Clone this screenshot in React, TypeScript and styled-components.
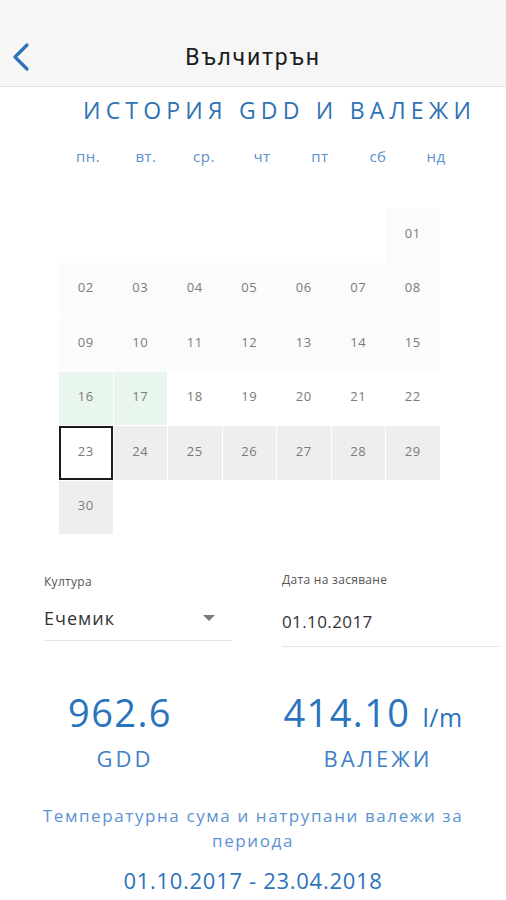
import React from "react";
import styled, { createGlobalStyle } from "styled-components";

const Global = createGlobalStyle`
  html, body { margin: 0; padding: 0; background: #ffffff; }
  body { font-family: "Open Sans", "DejaVu Sans", sans-serif; }
  * { box-sizing: border-box; }
`;

const Page = styled.div`
  width: 506px;
  height: 900px;
  overflow: hidden;
  background: #fff;
  display: flex;
  flex-direction: column;
`;

const Header = styled.header`
  height: 87px;
  background: #f6f6f6;
  border-bottom: 1px solid #e2e2e2;
  display: grid;
  grid-template-columns: 60px 1fr 60px;
  align-items: center;
  padding-top: 28px;
`;

const BackButton = styled.div`
  padding-left: 10px;
  display: flex;
  align-items: center;
`;

const HeaderTitle = styled.h1`
  margin: 0;
  text-align: center;
  font-family: Roboto, "Open Sans", sans-serif;
  font-weight: 400;
  font-size: 23px;
  letter-spacing: 1.8px;
  color: #1d1d1d;
`;

const SectionTitle = styled.h2`
  margin: 8px 0 0 0;
  padding-left: 83px;
  font-weight: 400;
  font-size: 23px;
  letter-spacing: 5.2px;
  color: #2f73b4;
  line-height: 30px;
  white-space: nowrap;
`;

const WeekRow = styled.div`
  margin: 20px 0 0 59px;
  display: grid;
  grid-template-columns: repeat(7, 58px);
  line-height: 22px;
`;

const WeekDay = styled.div`
  text-align: center;
  font-size: 15px;
  letter-spacing: 0.5px;
  color: #5b8fcd;
`;

const Calendar = styled.div`
  margin: 41px 0 0 59px;
  display: grid;
  grid-template-columns: repeat(7, 53.5px);
  grid-auto-rows: 53.5px;
  gap: 1px;
`;

type Tone = "none" | "faint" | "green" | "white" | "today" | "gray";

const bg: Record<Tone, string> = {
  none: "transparent",
  faint: "#fbfbfb",
  green: "#e8f6ee",
  white: "#ffffff",
  today: "#ffffff",
  gray: "#eeeeee",
};

const Cell = styled.div<{ $tone: Tone }>`
  display: flex;
  align-items: center;
  justify-content: center;
  padding-bottom: 4px;
  font-size: 13px;
  letter-spacing: 0.6px;
  color: #7a7a7a;
  background: ${(p) => bg[p.$tone]};
  border: ${(p) => (p.$tone === "today" ? "2px solid #1a1a1a" : "none")};
`;

const Form = styled.div`
  margin-top: 40px;
  display: grid;
  grid-template-columns: 188px 218px;
  column-gap: 50px;
  padding-left: 44px;
  align-items: start;
`;

const Field = styled.div`
  display: flex;
  flex-direction: column;
`;

const Label = styled.div<{ $lift?: number }>`
  font-size: 12px;
  color: #555;
  line-height: 16px;
  letter-spacing: 0.3px;
  margin-top: ${(p) => -(p.$lift ?? 0)}px;
`;

const Input = styled.div<{ $top: number; $pad: number }>`
  margin-top: ${(p) => p.$top}px;
  display: flex;
  align-items: center;
  justify-content: space-between;
  line-height: 22px;
  color: #333;
  padding-bottom: ${(p) => p.$pad}px;
  border-bottom: 1px solid #e4e4e4;
`;

const InputText = styled.span<{ $wide?: boolean }>`
  font-size: ${(p) => (p.$wide ? 18 : 17)}px;
  letter-spacing: ${(p) => (p.$wide ? 1 : 0.4)}px;
`;

const Caret = styled.span`
  width: 0;
  height: 0;
  margin-right: 17px;
  border-left: 6px solid transparent;
  border-right: 6px solid transparent;
  border-top: 6px solid #7b7b7b;
`;

const Stats = styled.div`
  margin-top: 45px;
  display: grid;
  grid-template-columns: 240px 266px;
`;

const Stat = styled.div`
  display: flex;
  flex-direction: column;
  align-items: center;
`;

const Value = styled.div`
  height: 40px;
  font-size: 38px;
  line-height: 40px;
  color: #2a73bd;
  letter-spacing: 1.4px;
  white-space: nowrap;
`;

const Unit = styled.span`
  font-size: 25px;
  line-height: 1;
  margin-left: 12px;
  letter-spacing: 0.5px;
`;

const StatLabel = styled.div`
  margin-top: 13px;
  padding-left: 10px;
  font-size: 22px;
  line-height: 26px;
  color: #3f80c6;
  letter-spacing: 3px;
`;

const Description = styled.p`
  margin: 32px 0 0 0;
  padding: 0 14px;
  text-align: center;
  font-size: 17px;
  line-height: 25px;
  color: #5b92d2;
  letter-spacing: 1.6px;
`;

const Range = styled.div`
  margin-top: 13px;
  text-align: center;
  font-size: 22px;
  line-height: 28px;
  color: #2a73bd;
  letter-spacing: 0.7px;
`;

const weekDays = ["пн.", "вт.", "ср.", "чт", "пт", "сб", "нд"];

function toneFor(day: number): Tone {
  if (day <= 15) return "faint";
  if (day === 16 || day === 17) return "green";
  if (day <= 22) return "white";
  if (day === 23) return "today";
  return "gray";
}

export default function App() {
  const cells: React.ReactNode[] = [];
  for (let i = 0; i < 6; i++) cells.push(<Cell key={"e" + i} $tone="none" />);
  for (let d = 1; d <= 30; d++) {
    cells.push(
      <Cell key={d} $tone={toneFor(d)}>
        {String(d).padStart(2, "0")}
      </Cell>
    );
  }

  return (
    <Page>
      <Global />
      <Header>
        <BackButton>
          <svg width="22" height="30" viewBox="0 0 22 30">
            <path d="M17 3 L5 15 L17 27" fill="none" stroke="#2d72b8" strokeWidth="3.2" strokeLinecap="round" strokeLinejoin="round" />
          </svg>
        </BackButton>
        <HeaderTitle>Вълчитрън</HeaderTitle>
        <div />
      </Header>
      <SectionTitle>ИСТОРИЯ GDD И ВАЛЕЖИ</SectionTitle>
      <WeekRow>
        {weekDays.map((w) => (
          <WeekDay key={w}>{w}</WeekDay>
        ))}
      </WeekRow>
      <Calendar>{cells}</Calendar>
      <Form>
        <Field>
          <Label>Култура</Label>
          <Input $top={17} $pad={11}>
            <InputText $wide>Ечемик</InputText>
            <Caret />
          </Input>
        </Field>
        <Field>
          <Label $lift={2}>Дата на засяване</Label>
          <Input $top={23} $pad={13}>
            <InputText>01.10.2017</InputText>
          </Input>
        </Field>
      </Form>
      <Stats>
        <Stat>
          <Value>962.6</Value>
          <StatLabel>GDD</StatLabel>
        </Stat>
        <Stat>
          <Value>
            414.10<Unit>l/m</Unit>
          </Value>
          <StatLabel>ВАЛЕЖИ</StatLabel>
        </Stat>
      </Stats>
      <Description>Температурна сума и натрупани валежи за периода</Description>
      <Range>01.10.2017 - 23.04.2018</Range>
    </Page>
  );
}
